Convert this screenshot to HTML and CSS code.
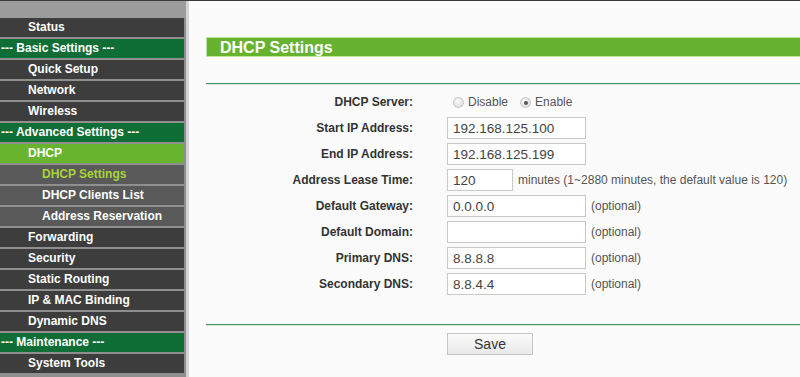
FILE: index.html
```html
<!DOCTYPE html>
<html lang="en">

<head>
    <meta charset="utf-8">
    <title>DHCP Settings</title>
    <link rel="stylesheet" href="styles.css">
</head>

<body>
    <div class="page">
        <aside class="sidebar">
            <div class="sidebar-top"></div>
            <ul class="menu">
                <li class="item">Status</li>
                <li class="group">--- Basic Settings ---</li>
                <li class="item">Quick Setup</li>
                <li class="item">Network</li>
                <li class="item">Wireless</li>
                <li class="group">--- Advanced Settings ---</li>
                <li class="item active">DHCP</li>
                <li class="sub current">DHCP Settings</li>
                <li class="sub">DHCP Clients List</li>
                <li class="sub">Address Reservation</li>
                <li class="item">Forwarding</li>
                <li class="item">Security</li>
                <li class="item">Static Routing</li>
                <li class="item">IP &amp; MAC Binding</li>
                <li class="item">Dynamic DNS</li>
                <li class="group">--- Maintenance ---</li>
                <li class="item">System Tools</li>
            </ul>
        </aside>

        <main class="content">
            <h1 class="title">DHCP Settings</h1>
            <div class="rule"></div>

            <form class="form">
                <div class="row">
                    <span class="label">DHCP Server:</span>
                    <span class="field">
                        <label class="choice"><input type="radio" name="server" class="radio"> Disable</label>
                        <label class="choice"><input type="radio" name="server" class="radio" checked> Enable</label>
                    </span>
                </div>
                <div class="row">
                    <span class="label">Start IP Address:</span>
                    <span class="field"><input class="text" value="192.168.125.100"></span>
                </div>
                <div class="row">
                    <span class="label">End IP Address:</span>
                    <span class="field"><input class="text" value="192.168.125.199"></span>
                </div>
                <div class="row">
                    <span class="label">Address Lease Time:</span>
                    <span class="field"><input class="text short" value="120"><span class="hint">minutes (1~2880 minutes, the default value is 120)</span></span>
                </div>
                <div class="row">
                    <span class="label">Default Gateway:</span>
                    <span class="field"><input class="text" value="0.0.0.0"><span class="hint">(optional)</span></span>
                </div>
                <div class="row">
                    <span class="label">Default Domain:</span>
                    <span class="field"><input class="text" value=""><span class="hint">(optional)</span></span>
                </div>
                <div class="row">
                    <span class="label">Primary DNS:</span>
                    <span class="field"><input class="text" value="8.8.8.8"><span class="hint">(optional)</span></span>
                </div>
                <div class="row">
                    <span class="label">Secondary DNS:</span>
                    <span class="field"><input class="text" value="8.8.4.4"><span class="hint">(optional)</span></span>
                </div>
            </form>

            <div class="rule bottom"></div>
            <div class="actions">
                <button type="button" class="save">Save</button>
            </div>
        </main>
    </div>
</body>

</html>
```

FILE: styles.css
```css
body {
    margin: 0;
    border-top: 1px solid #3a3a3a;
    background-color: #fbfbfb;
    font-family: "Liberation Sans", Arial, sans-serif;
    font-size: 12px;
    color: #333;
    overflow: hidden;
}

.page {
    display: flex;
    height: 376px;
}

/* left menu */
.sidebar {
    width: 186px;
    flex-shrink: 0;
    background-color: #8f8f8f;
    border-right: 3px solid #d3d3da;
}

.sidebar-top {
    height: 17px;
    background-color: #9c9c9c;
}

.menu {
    list-style: none;
    margin: 0;
    padding: 0;
}

.menu li {
    height: 19px;
    line-height: 19px;
    margin: 0 2px 2px 0;
    font-weight: bold;
    font-size: 12px;
    color: #fff;
    white-space: nowrap;
}

.item {
    background-color: #3d3d3d;
    padding-left: 28px;
}

.group {
    background-color: #0f6e36;
    padding-left: 1px;
}

.item.active {
    background-color: #68b42e;
}

.sub {
    background-color: #595959;
    padding-left: 42px;
}

.sub.current {
    color: #a8d43a !important;
}

/* main area */
.content {
    flex: 1;
    padding: 36px 0 0 17px;
}

.title {
    margin: 0;
    height: 18px;
    line-height: 19px;
    background-color: #67b22f;
    border: 1px solid #bfe3a0;
    border-right: none;
    color: #fff;
    font-size: 16px;
    font-weight: bold;
    padding-left: 13px;
}

.rule {
    margin-top: 26px;
    height: 1px;
    background-color: #4f8f6c;
    border-bottom: 1px solid #d3eadb;
}

.rule.bottom {
    margin-top: 27px;
}

.form {
    margin-top: 4px;
}

.row {
    display: grid;
    grid-template-columns: 207px 1fr;
    column-gap: 34px;
    height: 26px;
    align-items: center;
}

.label {
    text-align: right;
    font-weight: bold;
    color: #333;
}

.field {
    display: flex;
    align-items: center;
}

.text {
    box-sizing: border-box;
    width: 139px;
    height: 22px;
    margin: 0;
    padding: 0 5px;
    border: 1px solid #c9c9c9;
    background-color: #fff;
    font-family: "Liberation Sans", Arial, sans-serif;
    font-size: 13.5px;
    color: #444;
    outline: none;
}

.text.short {
    width: 66px;
}

.hint {
    margin-left: 5px;
    color: #555;
}

.choice {
    display: flex;
    align-items: center;
    color: #555;
    margin-right: 6px;
}

.radio {
    appearance: none;
    -webkit-appearance: none;
    width: 11px;
    height: 11px;
    margin: 0 4px 0 6px;
    border-radius: 50%;
    border: 1px solid #c4c4c4;
    background: radial-gradient(circle at 40% 35%, #fafafa, #d6d6d6);
    position: relative;
}

.radio:checked::after {
    content: "";
    position: absolute;
    left: 3px;
    top: 3px;
    width: 4px;
    height: 4px;
    border-radius: 50%;
    background-color: #555;
}

.actions {
    margin-top: 7px;
    padding-left: 241px;
}

.save {
    width: 86px;
    height: 22px;
    border: 1px solid #c6c6c6;
    background: linear-gradient(#fbfbfb, #e9e9e9);
    font-family: "Liberation Sans", Arial, sans-serif;
    font-size: 14px;
    color: #333;
    padding: 0;
}
```
